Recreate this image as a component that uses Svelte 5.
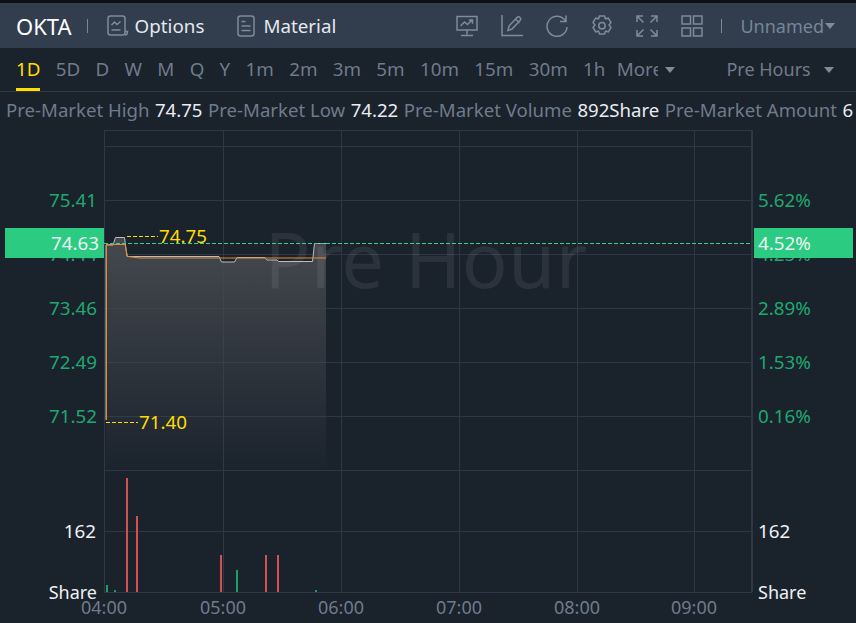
<script lang="ts">
  const tabs = ['1D', '5D', 'D', 'W', 'M', 'Q', 'Y', '1m', '2m', '3m', '5m', '10m', '15m', '30m', '1h'];
  const stats = [
    ['Pre-Market High', '74.75'],
    ['Pre-Market Low', '74.22'],
    ['Pre-Market Volume', '892Share'],
    ['Pre-Market Amount', '6']
  ];
  const hLines = [146, 200, 254, 308, 362, 416, 470, 531, 592];
  const vLines = [223, 341, 459, 577, 694];
  const leftLabels = [[75.41, 200], [74.44, 254], [73.46, 308], [72.49, 362], [71.52, 416]];
  const rightLabels = [['5.62%', 200], ['4.25%', 254], ['2.89%', 308], ['1.53%', 362], ['0.16%', 416]];
  const times = [['04:00', 104], ['05:00', 223], ['06:00', 341], ['07:00', 459], ['08:00', 577], ['09:00', 694]];
  const bars = [
    { x: 107, top: 585, up: true },
    { x: 115, top: 590, up: true },
    { x: 127, top: 478, up: false },
    { x: 137, top: 516, up: false },
    { x: 221, top: 555, up: false },
    { x: 237, top: 570, up: true },
    { x: 266, top: 555, up: false },
    { x: 278, top: 555, up: false },
    { x: 316, top: 590, up: true }
  ];
  const price = 'M106 420V245H113L115.500 237.500H124.500L127 256.500H135H219L221.500 262H234.500L237 257.500H265L267 260H277L278.500 261.500H312.500L314.500 243.500H326';
  const avg = 'M106.500 420V244.500H113.500L125 244.500L127.500 256.500L140 258H326';
</script>

<div class="page">
  <header class="top">
    <span class="symbol">OKTA</span>
    <i class="sep"></i>
    <svg class="ico link-ico" viewBox="0 0 22 22" fill="none">
      <rect x="1" y="1" width="17" height="19" rx="2.500" />
      <path d="M4.500 10l3-3 2.500 2.500 3.500-3M4.500 15h9M18 16.500h2.500c0 2-1 3.500-2.500 3.500" />
    </svg>
    <span class="link">Options</span>
    <svg class="ico link-ico second" viewBox="0 0 20 22" fill="none">
      <rect x="1" y="1" width="16" height="20" rx="2.500" />
      <path d="M4.500 6.500h4M4.500 11h9M4.500 15.500h9" />
    </svg>
    <span class="link">Material</span>
    <div class="tools">
      <svg class="ico tool" viewBox="0 0 22 22" fill="none">
        <path d="M1 1.500h20v13.500H1zM11 15v4.500M5 20.500h12M4.500 11l4-4 3 2.500 4.500-4.500M12.800 5h3.700v3.700" />
      </svg>
      <svg class="ico tool" viewBox="0 0 22 22" fill="none">
        <path d="M1 0v20.500h21M7 15.500l1-4.500 8-8.500c1-1 2-1 3 0s1 2 0 3l-8 8.500zM14.500 4l4 4" />
      </svg>
      <svg class="ico tool" viewBox="0 0 22 22" fill="none">
        <path d="M19.500 6A10 10 0 1 0 21 12M20 .5V6.500h-6" />
      </svg>
      <svg class="ico tool" viewBox="0 0 22 22" fill="none">
        <path d="M8.500 1h5l1 2.800 2.800-.6 2.700 4.300-2 2.500 2 2.500-2.700 4.300-2.800-.6-1 2.800h-5l-1-2.800-2.800.6L2 12.500l2-2.500-2-2.500 2.700-4.300 2.800.6z" />
        <circle cx="11" cy="10.800" r="3.200" />
      </svg>
      <svg class="ico tool" viewBox="0 0 22 22" fill="none">
        <path d="M1 7V1h6M1 1l6.500 6.500M15 1h6v6M21 1l-6.500 6.500M1 15v6h6M1 21l6.500-6.500M21 15v6h-6M21 21l-6.500-6.500" />
      </svg>
      <svg class="ico tool" viewBox="0 0 22 22" fill="none">
        <rect x="1" y="1" width="8.500" height="8" /><rect x="12.500" y="1" width="8.500" height="8" />
        <rect x="1" y="13" width="8.500" height="8" /><rect x="12.500" y="13" width="8.500" height="8" />
      </svg>
    </div>
    <i class="sep sep-right"></i>
    <span class="unnamed">Unnamed</span>
    <i class="caret caret-tight"></i>
  </header>

  <nav class="tabs">
    {#each tabs as t, i}
      <span class="tab" class:active={i === 0}>{t}</span>
    {/each}
    <span class="tab more">More</span>
    <i class="caret"></i>
    <span class="tab hours">Pre Hours</span>
    <i class="caret caret-end"></i>
  </nav>

  <div class="stats">
    {#each stats as [label, value]}
      <span class="label">{label}</span>
      <span class="value">{value}</span>
    {/each}
  </div>

  <svg class="chart" width="856" height="493" viewBox="0 130 856 493">
    <defs>
      <linearGradient id="area" x1="0" y1="0" x2="0" y2="1">
        <stop offset="0" stop-color="#45494f" />
        <stop offset="1" stop-color="#45494f" stop-opacity="0.02" />
      </linearGradient>
    </defs>

    {#each hLines as y}
      <line x1="104" x2="752" y1={y + 0.5} y2={y + 0.5} class="grid" />
    {/each}
    <line x1="104" x2="752" y1="130.500" y2="130.500" class="grid" />
    {#each vLines as x}
      <line x1={x + 0.5} x2={x + 0.5} y1="130" y2="592" class="grid" />
    {/each}
    <line x1="104.500" x2="104.500" y1="130" y2="592" class="grid" />
    <line x1="752" x2="752" y1="130" y2="592" class="grid edge" />

    <path d="{price}V470H106Z" fill="url(#area)" />
    <text x="426" y="288" class="watermark" text-anchor="middle">Pre Hour</text>
    <path d={price} class="price" />
    <path d={avg} class="avg" />

    <line x1="104" x2="752" y1="243.500" y2="243.500" class="last" />

    {#each bars as b}
      <rect x={b.x - 1} y={b.top} width="2" height={592 - b.top} fill={b.up ? '#1f9d68' : '#d64f52'} />
    {/each}

    <path d="M127 236.500H158M106 422.500H138" class="peak" />
    <text x="159" y="243" class="axis peak-text">74.75</text>
    <text x="139" y="429" class="axis peak-text">71.40</text>

    {#each leftLabels as [v, y]}
      <text x="97" y={y + 7} class="axis up" text-anchor="end">{v.toFixed(2)}</text>
    {/each}
    {#each rightLabels as [v, y]}
      <text x="758" y={Number(y) + 7} class="axis up">{v}</text>
    {/each}

    <rect x="5" y="228" width="99" height="30" fill="#2bcb82" />
    <rect x="754" y="228" width="99" height="30" fill="#2bcb82" />
    <text x="99" y="250" class="axis bright" text-anchor="end">74.63</text>
    <text x="758" y="250" class="axis bright">4.52%</text>

    <text x="96" y="538" class="axis bright" text-anchor="end">162</text>
    <text x="97" y="599" class="axis bright small" text-anchor="end">Share</text>
    <text x="758" y="538" class="axis bright">162</text>
    <text x="758" y="599" class="axis bright small">Share</text>

    {#each times as [t, x]}
      <text {x} y="614" class="axis time small" text-anchor="middle">{t}</text>
    {/each}
  </svg>
</div>

<style>
  :global(body) {
    margin: 0;
    background: #1a222c;
  }

  .page {
    width: 856px;
    height: 623px;
    overflow: hidden;
    background: #1a222c;
    color: #75808f;
    font-family: "Noto Sans", "Open Sans", sans-serif;
    font-size: 18.800px;
  }

  .top {
    display: flex;
    align-items: center;
    height: 45px;
    margin-top: 0;
    border-top: 3px solid #0d1014;
    background: #323d4d;
  }

  .symbol {
    margin-left: 16px;
    color: #fff;
    font-size: 22px;
  }

  .sep {
    width: 1px;
    height: 14px;
    margin-left: 15px;
    background: #7d8794;
  }

  .ico {
    flex: none;
    width: 22px;
    height: 22px;
    stroke: #7f8b9a;
    stroke-width: 1.500;
  }

  .link-ico {
    margin-left: 19px;
  }

  .link-ico.second {
    width: 20px;
    margin-left: 33px;
  }

  .link {
    margin-left: 6px;
    color: #e4e9ef;
  }

  .tools {
    display: flex;
    gap: 23px;
    margin-left: auto;
  }

  .sep-right {
    margin-left: 18px;
  }

  .unnamed {
    margin-left: 18px;
    color: #76859a;
    font-size: 18px;
  }

  .caret {
    flex: none;
    width: 0;
    height: 0;
    margin-left: 7px;
    border-top: 6px solid #7f8b9a;
    border-left: 5px solid transparent;
    border-right: 5px solid transparent;
  }

  .caret-tight {
    margin: 0 21px 0 1px;
  }

  .tabs {
    display: flex;
    align-items: center;
    gap: 15.300px;
    height: 43px;
    padding-left: 16px;
    border-bottom: 1px solid #323a45;
  }

  .tab {
    position: relative;
    line-height: 43px;
    color: #6f7b8b;
  }

  .tab.active {
    color: #ffdd00;
  }

  .tab.active::after {
    content: "";
    position: absolute;
    left: 0;
    right: 0;
    bottom: 0;
    height: 3px;
    background: #ffdd00;
  }

  .more {
    flex: none;
    width: 41px;
    overflow: hidden;
    margin-left: -4px;
  }

  .more + .caret {
    margin-left: -8px;
  }

  .hours {
    margin-left: auto;
    font-size: 18px;
  }

  .caret-end {
    margin: 0 22px 0 -2px;
  }

  .stats {
    display: flex;
    gap: 5.500px;
    height: 34px;
    padding: 0 0 4px 6px;
    align-items: center;
    white-space: nowrap;
    overflow: hidden;
    font-size: 18.600px;
  }

  .label {
    color: #6f7b8b;
  }

  .value {
    color: #e9edf1;
  }

  .chart {
    display: block;
  }

  .grid {
    stroke: #2e3743;
    stroke-width: 1;
  }

  .grid.edge {
    stroke-width: 2;
  }

  .watermark {
    fill: rgba(255, 255, 255, 0.075);
    font-size: 76px;
    letter-spacing: 0.500px;
  }

  .avg {
    fill: none;
    stroke: #e58a2e;
    stroke-width: 1;
  }

  .price {
    fill: none;
    stroke: #b9bcc2;
    stroke-width: 1;
  }

  .last {
    stroke: #3fcb92;
    stroke-width: 1;
    stroke-dasharray: 4 2;
  }

  .peak {
    fill: none;
    stroke: #ffdd00;
    stroke-width: 1;
    stroke-dasharray: 4 2;
  }

  .axis {
    font-size: 18.800px;
  }

  .axis.small {
    font-size: 18px;
  }

  .up {
    fill: #1fa870;
  }

  .bright {
    fill: #eef1f4;
  }

  .peak-text {
    fill: #ffdd00;
  }

  .time {
    fill: #6f7b8b;
  }
</style>
